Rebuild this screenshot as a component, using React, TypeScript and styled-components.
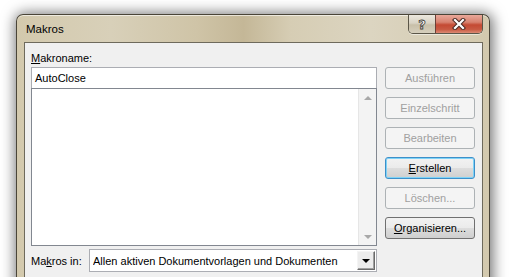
import React from "react";
import styled, { createGlobalStyle, css } from "styled-components";

const Global = createGlobalStyle`
  html, body { margin: 0; padding: 0; background: #ffffff; overflow: hidden; }
  body { font-family: "Liberation Sans", Arial, sans-serif; font-size: 11px; color: #000; }
  * { box-sizing: border-box; }
`;

const Page = styled.div`
  width: 510px;
  height: 277px;
  padding: 14px 0 0 16px;
  overflow: hidden;
`;

const Window = styled.div`
  width: 474px;
  height: 300px;
  border: 1px solid #4a4538;
  border-bottom: none;
  border-radius: 7px 7px 0 0;
  background: linear-gradient(90deg, #d3c9ad 0%, #d8d0b9 20%, #cfc4a7 38%, #c4b797 48%, #d6cdb4 58%, #dcd5c1 75%, #d3c9ae 100%);
  box-shadow: 1px 1px 14px 2px rgba(0, 0, 0, 0.55), inset 0 1px 0 rgba(255, 255, 255, 0.6);
  padding: 0 6px 0 7px;
  display: flex;
  flex-direction: column;
`;

const TitleBar = styled.div`
  height: 27px;
  display: flex;
  align-items: flex-start;
`;

const Title = styled.div`
  padding: 8px 0 0 2px;
  font-size: 11.5px;
  color: #000;
  flex: 1;
`;

const CaptionGroup = styled.div`
  display: flex;
  height: 19px;
  border: 1px solid #5b5648;
  border-top: none;
  border-radius: 0 0 5px 5px;
  overflow: hidden;
  box-shadow: 0 1px 0 rgba(255, 255, 255, 0.5);
`;

const CaptionButton = styled.div<{ $close?: boolean }>`
  height: 100%;
  display: flex;
  align-items: center;
  justify-content: center;
  ${(p) =>
    p.$close
      ? css`
          width: 47px;
          background: linear-gradient(180deg, #e9a89a 0%, #d7826f 40%, #c44a33 55%, #c85a42 80%, #dc8a74 100%);
          border-left: 1px solid #6b4038;
        `
      : css`
          width: 26px;
          background: linear-gradient(180deg, #ebe7de 0%, #d9d3c4 45%, #c8bfa8 55%, #d6cfbd 100%);
        `}
`;

const HelpGlyph = styled.span`
  font-family: "DejaVu Sans", sans-serif;
  font-weight: bold;
  font-size: 13px;
  line-height: 1;
  color: #ffffff;
  -webkit-text-stroke: 0.8px #3c3a34;
`;

const Client = styled.div`
  flex: 1;
  background: #f0f0f0;
  border: 1px solid #6e6a5c;
  border-bottom: none;
  display: flex;
  padding: 0 7px 0 6px;
  gap: 8px;
`;

const LeftCol = styled.div`
  width: 346px;
  display: flex;
  flex-direction: column;
`;

const Label = styled.div`
  height: 24px;
  padding-top: 8px;
  line-height: 14px;
`;

const NameInput = styled.div`
  height: 22px;
  border: 1px solid #abadb3;
  border-bottom-color: #dcdfe6;
  background: #fff;
  padding: 3px 0 0 3px;
  line-height: 14px;
`;

const List = styled.div`
  height: 158px;
  margin-top: -1px;
  border: 1px solid #828790;
  background: #fff;
  display: flex;
  justify-content: flex-end;
`;

const ScrollBar = styled.div`
  width: 18px;
  height: 100%;
  background: #f3f3f3;
  border-left: 1px solid #e6e6e6;
  display: flex;
  flex-direction: column;
  justify-content: space-between;
  align-items: center;
  padding: 7px 0 6px;
`;

const SmallArrow = styled.div<{ $down?: boolean }>`
  width: 0;
  height: 0;
  border-left: 4px solid transparent;
  border-right: 4px solid transparent;
  ${(p) =>
    p.$down
      ? css`border-top: 4px solid #a8a8a8;`
      : css`border-bottom: 4px solid #a8a8a8;`}
`;

const BottomRow = styled.div`
  margin-top: 3px;
  display: flex;
  align-items: center;
`;

const BottomLabel = styled.div`
  width: 58px;
  white-space: nowrap;
`;

const Combo = styled.div`
  width: 288px;
  height: 23px;
  border: 1px solid #abadb3;
  background: #fff;
  display: flex;
  align-items: center;
  padding: 0 1px 0 3px;
`;

const ComboText = styled.div`
  flex: 1;
  white-space: nowrap;
  overflow: hidden;
`;

const ComboButton = styled.div`
  width: 18px;
  height: 19px;
  background: #ececec;
  border: 1px solid;
  border-color: #f4f4f4 #6a6a6a #6a6a6a #f4f4f4;
  box-shadow: inset -1px -1px 0 #a0a0a0;
  display: flex;
  align-items: center;
  justify-content: center;
`;

const BlackArrow = styled.div`
  width: 0;
  height: 0;
  border-left: 4px solid transparent;
  border-right: 4px solid transparent;
  border-top: 4px solid #000;
`;

const RightCol = styled.div`
  width: 90px;
  padding-top: 24px;
  display: flex;
  flex-direction: column;
  gap: 8px;
`;

const Button = styled.div<{ $state: "disabled" | "normal" | "focused" }>`
  height: 22px;
  border-radius: 3px;
  display: flex;
  align-items: center;
  justify-content: center;
  line-height: 1;
  white-space: nowrap;
  ${(p) =>
    p.$state === "disabled"
      ? css`
          border: 1px solid #adb2b5;
          background: #f4f4f4;
          color: #a0a0a0;
        `
      : p.$state === "focused"
      ? css`
          border: 1px solid #3c8fc9;
          box-shadow: inset 0 0 0 1px #7fd3f7;
          background: linear-gradient(180deg, #f2f2f2 0%, #ebebeb 48%, #dddddd 52%, #cfcfcf 100%);
          color: #000;
        `
      : css`
          border: 1px solid #707070;
          background: linear-gradient(180deg, #f2f2f2 0%, #ebebeb 48%, #dddddd 52%, #cfcfcf 100%);
          color: #000;
        `}
`;

function CloseIcon() {
  return (
    <svg width="14" height="12" viewBox="0 0 14 12">
      <path d="M3 2 L11 10 M11 2 L3 10" stroke="#4a2a24" strokeWidth="4.2" strokeLinecap="square" />
      <path d="M3 2 L11 10 M11 2 L3 10" stroke="#ffffff" strokeWidth="2.2" strokeLinecap="square" />
    </svg>
  );
}

export default function App() {
  return (
    <>
      <Global />
      <Page>
        <Window>
          <TitleBar>
            <Title>Makros</Title>
            <CaptionGroup>
              <CaptionButton>
                <HelpGlyph>?</HelpGlyph>
              </CaptionButton>
              <CaptionButton $close>
                <CloseIcon />
              </CaptionButton>
            </CaptionGroup>
          </TitleBar>
          <Client>
            <LeftCol>
              <Label>
                <u>M</u>akroname:
              </Label>
              <NameInput>AutoClose</NameInput>
              <List>
                <ScrollBar>
                  <SmallArrow />
                  <SmallArrow $down />
                </ScrollBar>
              </List>
              <BottomRow>
                <BottomLabel>
                  Ma<u>k</u>ros in:
                </BottomLabel>
                <Combo>
                  <ComboText>Allen aktiven Dokumentvorlagen und Dokumenten</ComboText>
                  <ComboButton>
                    <BlackArrow />
                  </ComboButton>
                </Combo>
              </BottomRow>
            </LeftCol>
            <RightCol>
              <Button $state="disabled">Ausführen</Button>
              <Button $state="disabled">Einzelschritt</Button>
              <Button $state="disabled">Bearbeiten</Button>
              <Button $state="focused">
                <span>
                  <u>E</u>rstellen
                </span>
              </Button>
              <Button $state="disabled">Löschen...</Button>
              <Button $state="normal">
                <span>
                  <u>O</u>rganisieren...
                </span>
              </Button>
            </RightCol>
          </Client>
        </Window>
      </Page>
    </>
  );
}
